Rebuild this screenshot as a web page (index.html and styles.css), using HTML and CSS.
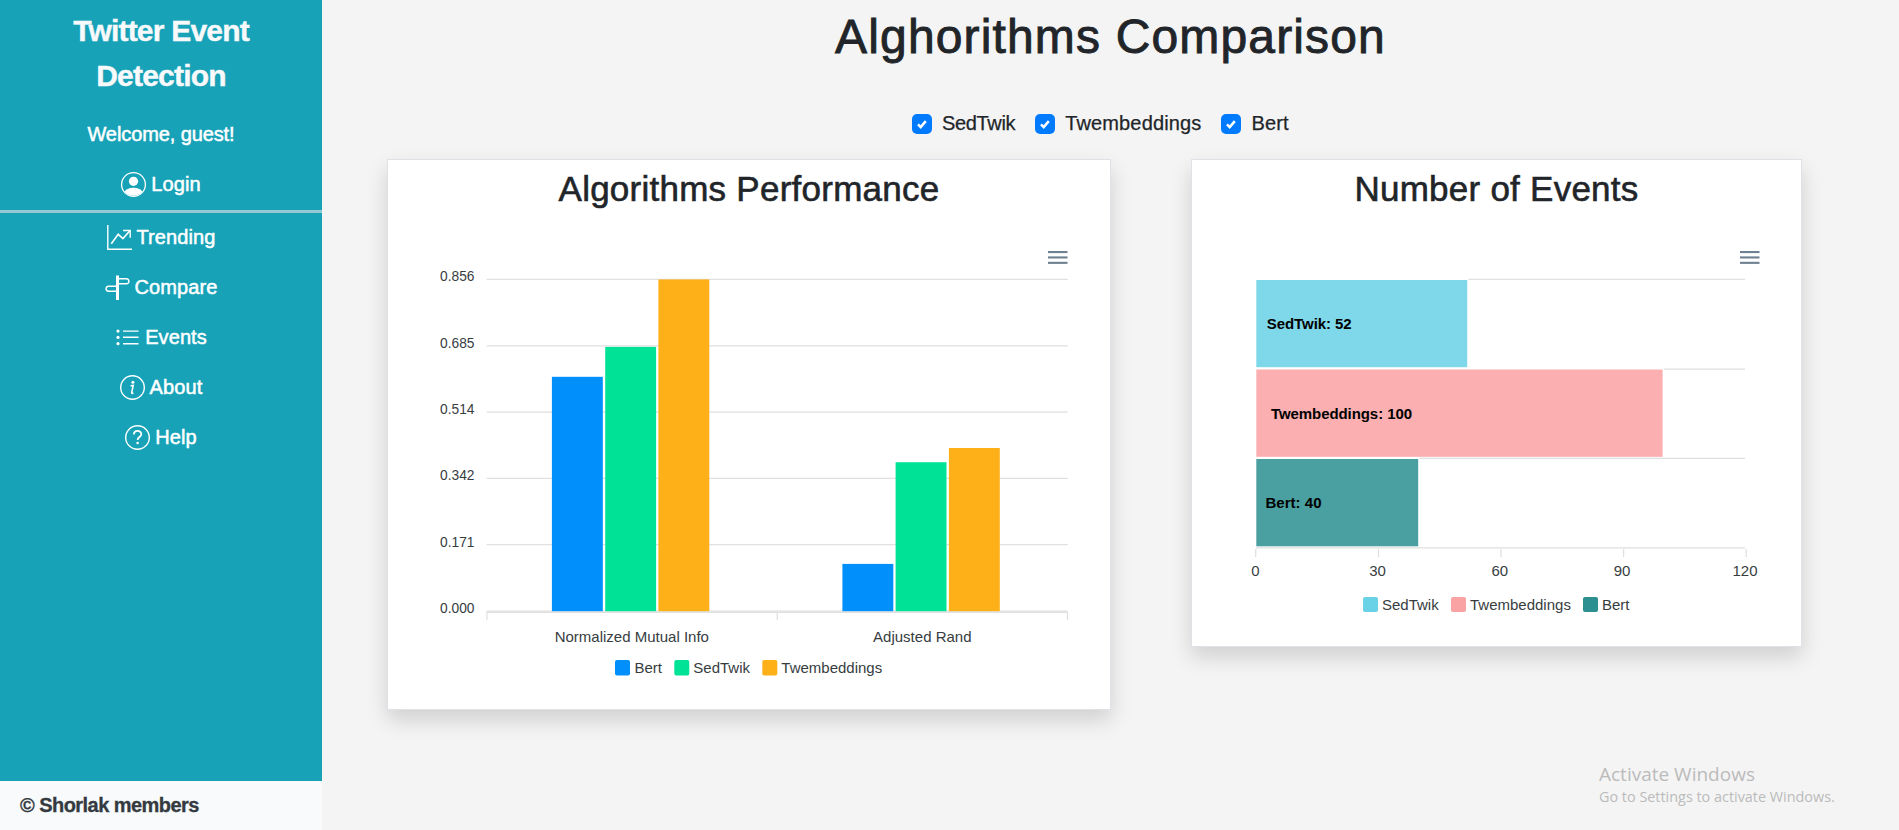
FILE: index.html
```html
<!DOCTYPE html>
<html lang="en">
<head>
<meta charset="utf-8">
<title>Twitter Event Detection</title>
<link rel="stylesheet" href="styles.css">
</head>
<body>
<div class="layout">
  <aside class="sidebar">
    <h1 class="brand">Twitter Event<br>Detection</h1>
    <div class="nav-item welcome">Welcome, guest!</div>
    <a class="nav-item">
      <svg class="icon" viewBox="0 0 25 25"><circle cx="12.5" cy="12.5" r="11.9" fill="none" stroke="#fff" stroke-width="1.3"/><circle cx="12.5" cy="9.3" r="4.6" fill="#fff"/><path d="M3.6 19.4C5.4 17 8.4 15.8 12.5 15.8s7.100 1.200 8.900 3.600A11.200 11.200 0 0 1 12.500 23.700 11.200 11.200 0 0 1 3.600 19.400z" fill="#fff"/></svg>
      <span>Login</span>
    </a>
    <hr class="rule">
    <a class="nav-item">
      <svg class="icon line" viewBox="0 0 25 25"><path d="M.8 0v24.200H25"/><path d="M4.300 18.700 11.200 9.300l4.700 4.200 7-7.800" stroke-width="1.600"/><path d="M16 5.500h7.200v7.200"/></svg>
      <span>Trending</span>
    </a>
    <a class="nav-item">
      <svg class="icon line" viewBox="0 0 25 25"><path d="M12.500.5v24.500" stroke-width="3"/><path d="M13 3.700h8.500q2 0 2.500 2.600q-.5 2.500-2.500 2.500H13M12 11.200H3.500Q1.400 11.200 1 13.700q.400 2.600 2.500 2.600H12"/></svg>
      <span>Compare</span>
    </a>
    <a class="nav-item">
      <svg class="icon line" viewBox="0 0 25 25"><path d="M8 6.100h15.500M8 12.300h15.500M8 18.700h15.500"/><g fill="#fff" stroke="none"><circle cx="3" cy="6.100" r="1.600"/><circle cx="3" cy="12.400" r="1.600"/><circle cx="3" cy="18.700" r="1.600"/></g></svg>
      <span>Events</span>
    </a>
    <a class="nav-item">
      <svg class="icon line" viewBox="0 0 25 25"><circle cx="12.500" cy="12.500" r="11.800"/><circle cx="12.900" cy="7.200" r="1.500" fill="#fff" stroke="none"/><path d="M10.600 10.900l2.600-.500-1.500 7.200q-.200 1.300 1.700.500" stroke-width="1.600"/></svg>
      <span>About</span>
    </a>
    <a class="nav-item">
      <svg class="icon line" viewBox="0 0 25 25"><circle cx="12.500" cy="12.500" r="11.800"/><path d="M8.900 9.500c0-4.700 7.400-4.700 7.400-.300 0 2.700-3.700 2.800-3.700 5.700" stroke-width="1.800"/><circle cx="12.600" cy="18" r="1.300" fill="#fff" stroke="none"/></svg>
      <span>Help</span>
    </a>
    <footer class="footer">© Shorlak members</footer>
  </aside>
  <main class="main">
    <h2 class="page-title">Alghorithms Comparison</h2>
    <div class="filters">
      <label class="check"><svg class="box" viewBox="0 0 20 20"><rect width="20" height="20" rx="5"/><path d="M6 10.400l2.700 2.700 5.100-6"/></svg><span class="tight">SedTwik</span></label>
      <label class="check"><svg class="box" viewBox="0 0 20 20"><rect width="20" height="20" rx="5"/><path d="M6 10.400l2.700 2.700 5.100-6"/></svg><span>Twembeddings</span></label>
      <label class="check"><svg class="box" viewBox="0 0 20 20"><rect width="20" height="20" rx="5"/><path d="M6 10.400l2.700 2.700 5.100-6"/></svg><span>Bert</span></label>
    </div>
    <div class="cards">
      <section class="card performance">
        <h3 class="card-title">Algorithms Performance</h3>
        <svg class="chart" viewBox="388 230 722 478" width="722" height="478">
          <g fill="#6e8192"><rect x="1048" y="251" width="19.500" height="2.100"/><rect x="1048" y="256.400" width="19.500" height="2.100"/><rect x="1048" y="261.800" width="19.500" height="2.100"/></g>
          <g stroke="#e0e0e0" stroke-width="1.250">
            <path d="M486.700 279.400H1067.600M486.700 345.800H1067.600M486.700 412.100H1067.600M486.700 478.400H1067.600M486.700 544.700H1067.600M486.700 611H1067.600"/>
            <path d="M486.700 612.400H1067.600M486.900 612V620M777.200 612V620M1067.500 612V620"/>
          </g>
          <g fill="#008ffb"><rect x="551.900" y="376.800" width="50.900" height="234.400"/><rect x="842.400" y="563.900" width="50.900" height="47.300"/></g>
          <g fill="#00e396"><rect x="605.200" y="346.900" width="50.900" height="264.300"/><rect x="895.600" y="462.200" width="50.900" height="149"/></g>
          <g fill="#feb019"><rect x="658.400" y="279.400" width="50.900" height="331.800"/><rect x="948.900" y="448" width="50.900" height="163.200"/></g>
          <g class="ylabels"><text x="474.500" y="281">0.856</text><text x="474.500" y="348">0.685</text><text x="474.500" y="414">0.514</text><text x="474.500" y="480">0.342</text><text x="474.500" y="547">0.171</text><text x="474.500" y="613">0.000</text></g>
          <g class="xlabels"><text x="631.800" y="642">Normalized Mutual Info</text><text x="922.300" y="642">Adjusted Rand</text></g>
          <g class="legend">
            <rect x="615" y="660" width="15" height="15.500" rx="2" fill="#008ffb"/><text x="634.500" y="673">Bert</text>
            <rect x="674.300" y="660" width="15" height="15.500" rx="2" fill="#00e396"/><text x="693.300" y="673">SedTwik</text>
            <rect x="762.300" y="660" width="15" height="15.500" rx="2" fill="#feb019"/><text x="781.300" y="673">Twembeddings</text>
          </g>
        </svg>
      </section>
      <section class="card events">
        <h3 class="card-title">Number of Events</h3>
        <svg class="chart" viewBox="1192 230 609 415" width="609" height="415">
          <g fill="#6e8192"><rect x="1740" y="251" width="19.500" height="2.100"/><rect x="1740" y="256.400" width="19.500" height="2.100"/><rect x="1740" y="261.800" width="19.500" height="2.100"/></g>
          <g stroke="#e0e0e0" stroke-width="1.250">
            <path d="M1468.500 279.400H1745M1664 369H1745M1419.500 458.400H1745M1256 547.800H1745"/>
            <path d="M1255.700 549V557M1378.500 549V557M1501 549V557M1623.600 549V557M1746.200 549V557"/>
          </g>
          <rect x="1256.300" y="280" width="210.900" height="87.200" fill="#7fd8e9"/>
          <rect x="1256.300" y="369.500" width="406.300" height="87.300" fill="#fbafb1"/>
          <rect x="1256.300" y="459" width="161.900" height="87.300" fill="#4aa0a0"/>
          <g class="datalabels"><text x="1266.700" y="329" textLength="85">SedTwik: 52</text><text x="1271" y="419" textLength="141">Twembeddings: 100</text><text x="1265.500" y="508" textLength="56">Bert: 40</text></g>
          <g class="xlabels"><text x="1255.300" y="576">0</text><text x="1377.500" y="576">30</text><text x="1499.800" y="576">60</text><text x="1622.100" y="576">90</text><text x="1745" y="576">120</text></g>
          <g class="legend">
            <rect x="1363" y="597" width="15" height="15" rx="2" fill="#69d2e7"/><text x="1382" y="610">SedTwik</text>
            <rect x="1451" y="597" width="15" height="15" rx="2" fill="#f9a3a4"/><text x="1470" y="610">Twembeddings</text>
            <rect x="1583" y="597" width="15" height="15" rx="2" fill="#2b908f"/><text x="1602" y="610">Bert</text>
          </g>
        </svg>
      </section>
    </div>
  </main>
</div>
<div class="watermark"><div class="wm-title">Activate Windows</div><div class="wm-sub">Go to Settings to activate Windows.</div></div>
</body>
</html>
```

FILE: styles.css
```css
* { box-sizing: border-box; }
body {
  margin: 0;
  background: #f4f4f4;
  color: #212529;
  font-family: "Liberation Sans", Arial, sans-serif;
  font-size: 20px;
  overflow: hidden;
}
.layout { display: flex; height: 830px; }
.sidebar {
  width: 322px;
  flex: none;
  display: flex;
  flex-direction: column;
  background: #17a2b8;
  color: #fff;
}
.brand {
  margin: 0 0 11px;
  padding-top: 8px;
  text-align: center;
  color: #f8f9fa;
  font-size: 30px;
  line-height: 45px;
  letter-spacing: -.8px;
  -webkit-text-stroke: .4px #f8f9fa;
}
.nav-item {
  display: flex;
  align-items: center;
  justify-content: center;
  gap: 5px;
  height: 50px;
  flex: none;
  letter-spacing: .1px;
  -webkit-text-stroke: .5px #fff;
}
.welcome { letter-spacing: -.1px; }
.icon { width: 25px; height: 25px; overflow: visible; }
.line { fill: none; stroke: #fff; stroke-width: 1.4; }
.rule {
  width: 100%;
  height: 3px;
  margin: 1px 0 -1px;
  border: 0;
  background: #94c8d3;
}
.footer {
  margin-top: auto;
  height: 49px;
  padding-left: 20px;
  background: #f8fafc;
  color: #343a40;
  font-weight: bold;
  line-height: 48px;
  letter-spacing: -.55px;
  -webkit-text-stroke: .3px #343a40;
}
.main { flex: 1; }
.page-title {
  margin: 0;
  padding-top: 8px;
  height: 108px;
  text-align: center;
  font-size: 48px;
  font-weight: normal;
  line-height: 58px;
  letter-spacing: 1.15px;
  -webkit-text-stroke: .9px #212529;
}
.filters {
  display: flex;
  gap: 20px;
  height: 51px;
  padding-left: 590px;
}
.check { display: flex; align-items: center; gap: 10px; height: 31px; color: #212529; letter-spacing: .15px; -webkit-text-stroke: .25px #212529; }
.tight { letter-spacing: -.35px; }
.box { width: 20px; height: 20px; fill: #007bff; }
.box path { fill: none; stroke: #fff; stroke-width: 2.5; }
.cards { display: flex; align-items: flex-start; gap: 80px; padding-left: 65px; }
.card {
  flex: none;
  background: #fff;
  border: 1px solid #dee2e6;
  box-shadow: 0 10px 20px rgba(0, 0, 0, .15);
}
.performance { width: 724px; height: 551px; }
.events { width: 611px; height: 488px; }
.card-title {
  margin: 0;
  height: 70px;
  padding-top: 8px;
  text-align: center;
  font-size: 35px;
  font-weight: normal;
  line-height: 42px;
  letter-spacing: .25px;
  -webkit-text-stroke: .6px #212529;
}
.chart { display: block; }
.chart text { font-size: 15px; fill: #373d3f; }
.chart .ylabels text { font-size: 13.75px; text-anchor: end; }
.xlabels text { text-anchor: middle; }
.chart .datalabels text { font-weight: bold; fill: #000; }
.watermark { position: absolute; left: 1599px; top: 760px; color: #bbb; font-family: "Open Sans", "Noto Sans", sans-serif; white-space: nowrap; }
.wm-title { font-size: 19px; line-height: 28px; }
.wm-sub { font-size: 14.4px; line-height: 18px; }
```
